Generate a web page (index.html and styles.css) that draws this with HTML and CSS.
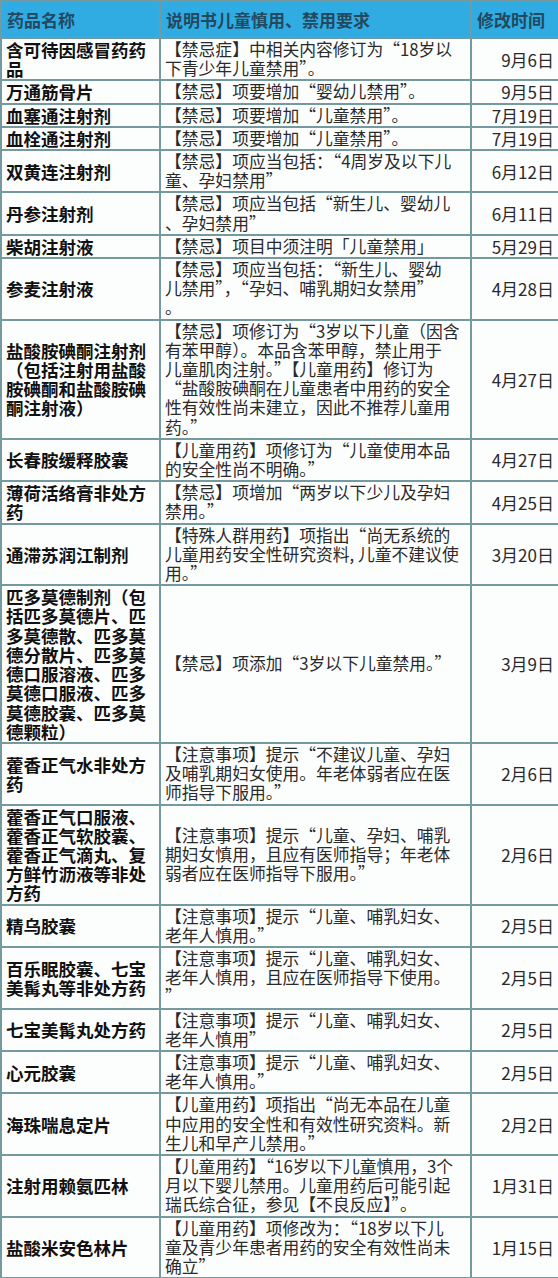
FILE: index.html
```html
<!DOCTYPE html>
<html lang="zh-CN">
<head>
<meta charset="utf-8">
<title>药品说明书儿童慎用、禁用要求修改</title>
<link rel="stylesheet" href="styles.css">
</head>
<body>
<table class="drug-table">
  <colgroup>
    <col class="c-name">
    <col class="c-desc">
    <col class="c-date">
  </colgroup>
  <thead>
    <tr>
      <th>药品名称</th>
      <th>说明书儿童慎用、禁用要求</th>
      <th>修改时间</th>
    </tr>
  </thead>
  <tbody>
    <tr><td class="name">含可待因感冒药药<br>品</td><td class="desc">【禁忌症】中相关内容修订为“18岁以<br>下青少年儿童禁用”。</td><td class="date">9月6日</td></tr>
    <tr><td class="name">万通筋骨片</td><td class="desc">【禁忌】项要增加“婴幼儿禁用”。</td><td class="date">9月5日</td></tr>
    <tr><td class="name">血塞通注射剂</td><td class="desc">【禁忌】项要增加“儿童禁用”。</td><td class="date">7月19日</td></tr>
    <tr><td class="name">血栓通注射剂</td><td class="desc">【禁忌】项要增加“儿童禁用”。</td><td class="date">7月19日</td></tr>
    <tr><td class="name">双黄连注射剂</td><td class="desc">【禁忌】项应当包括：“4周岁及以下儿<br>童、孕妇禁用”</td><td class="date">6月12日</td></tr>
    <tr><td class="name">丹参注射剂</td><td class="desc">【禁忌】项应当包括“新生儿、婴幼儿<br>、孕妇禁用”</td><td class="date">6月11日</td></tr>
    <tr><td class="name">柴胡注射液</td><td class="desc">【禁忌】项目中须注明「儿童禁用」</td><td class="date">5月29日</td></tr>
    <tr><td class="name">参麦注射液</td><td class="desc">【禁忌】项应当包括：“新生儿、婴幼<br>儿禁用”，“孕妇、哺乳期妇女禁用”<br>。</td><td class="date">4月28日</td></tr>
    <tr><td class="name">盐酸胺碘酮注射剂<br>（包括注射用盐酸<br>胺碘酮和盐酸胺碘<br>酮注射液）</td><td class="desc">【禁忌】项修订为“3岁以下儿童（因含<br>有苯甲醇）。本品含苯甲醇，禁止用于<br>儿童肌肉注射。”【儿童用药】修订为<br>“盐酸胺碘酮在儿童患者中用药的安全<br>性有效性尚未建立，因此不推荐儿童用<br>药。”</td><td class="date">4月27日</td></tr>
    <tr><td class="name">长春胺缓释胶囊</td><td class="desc">【儿童用药】项修订为“儿童使用本品<br>的安全性尚不明确。”</td><td class="date">4月27日</td></tr>
    <tr><td class="name">薄荷活络膏非处方<br>药</td><td class="desc">【禁忌】项增加“两岁以下少儿及孕妇<br>禁用。”</td><td class="date">4月25日</td></tr>
    <tr><td class="name">通滞苏润江制剂</td><td class="desc">【特殊人群用药】项指出“尚无系统的<br>儿童用药安全性研究资料, 儿童不建议使<br>用。”</td><td class="date">3月20日</td></tr>
    <tr><td class="name">匹多莫德制剂（包<br>括匹多莫德片、匹<br>多莫德散、匹多莫<br>德分散片、匹多莫<br>德口服溶液、匹多<br>莫德口服液、匹多<br>莫德胶囊、匹多莫<br>德颗粒）</td><td class="desc">【禁忌】项添加“3岁以下儿童禁用。”</td><td class="date">3月9日</td></tr>
    <tr><td class="name">藿香正气水非处方<br>药</td><td class="desc">【注意事项】提示“不建议儿童、孕妇<br>及哺乳期妇女使用。年老体弱者应在医<br>师指导下服用。”</td><td class="date">2月6日</td></tr>
    <tr><td class="name">藿香正气口服液、<br>藿香正气软胶囊、<br>藿香正气滴丸、复<br>方鲜竹沥液等非处<br>方药</td><td class="desc">【注意事项】提示“儿童、孕妇、哺乳<br>期妇女慎用，且应有医师指导；年老体<br>弱者应在医师指导下服用。”</td><td class="date">2月6日</td></tr>
    <tr><td class="name">精乌胶囊</td><td class="desc">【注意事项】提示“儿童、哺乳妇女、<br>老年人慎用。”</td><td class="date">2月5日</td></tr>
    <tr><td class="name">百乐眠胶囊、七宝<br>美髯丸等非处方药</td><td class="desc">【注意事项】提示“儿童、哺乳妇女、<br>老年人慎用，且应在医师指导下使用。<br>”</td><td class="date">2月5日</td></tr>
    <tr><td class="name">七宝美髯丸处方药</td><td class="desc">【注意事项】提示“儿童、哺乳妇女、<br>老年人慎用”</td><td class="date">2月5日</td></tr>
    <tr><td class="name">心元胶囊</td><td class="desc">【注意事项】提示“儿童、哺乳妇女、<br>老年人慎用。”</td><td class="date">2月5日</td></tr>
    <tr><td class="name">海珠喘息定片</td><td class="desc">【儿童用药】项指出“尚无本品在儿童<br>中应用的安全性和有效性研究资料。新<br>生儿和早产儿禁用。”</td><td class="date">2月2日</td></tr>
    <tr><td class="name">注射用赖氨匹林</td><td class="desc">【儿童用药】“16岁以下儿童慎用，3个<br>月以下婴儿禁用。儿童用药后可能引起<br>瑞氏综合征，参见【不良反应】”。</td><td class="date">1月31日</td></tr>
    <tr><td class="name">盐酸米安色林片</td><td class="desc">【儿童用药】项修改为：“18岁以下儿<br>童及青少年患者用药的安全有效性尚未<br>确立”</td><td class="date">1月15日</td></tr>
  </tbody>
</table>
</body>
</html>
```

FILE: styles.css
```css
html, body {
  margin: 0;
  padding: 0;
  background: #ffffff;
}

body {
  font-family: "Noto Sans CJK SC", "Noto Sans", sans-serif;
  color: #222;
}

.drug-table {
  width: 558px;
  border-collapse: collapse;
  table-layout: fixed;
}

.c-name { width: 159px; }
.c-desc { width: 311px; }
.c-date { width: 88px; }

.drug-table th,
.drug-table td {
  border: 2px solid #74999f;
  vertical-align: middle;
}

.drug-table th {
  background: #30ace3;
  color: #22495e;
  font-weight: 700;
  font-size: 17px;
  text-align: left;
  height: 35px;
  padding: 0 5px;
  line-height: 20px;
}

.drug-table td {
  background: #fcfefe;
  line-height: 19.2px;
  padding: 1px 4px;
}

.name {
  font-weight: 700;
  font-size: 17.5px;
  color: #111;
  white-space: nowrap;
}

.desc {
  font-size: 16.8px;
  color: #2a2a2a;
  white-space: nowrap;
}

.date {
  font-size: 17px;
  color: #2a2a2a;
  text-align: right;
  white-space: nowrap;
}
```
